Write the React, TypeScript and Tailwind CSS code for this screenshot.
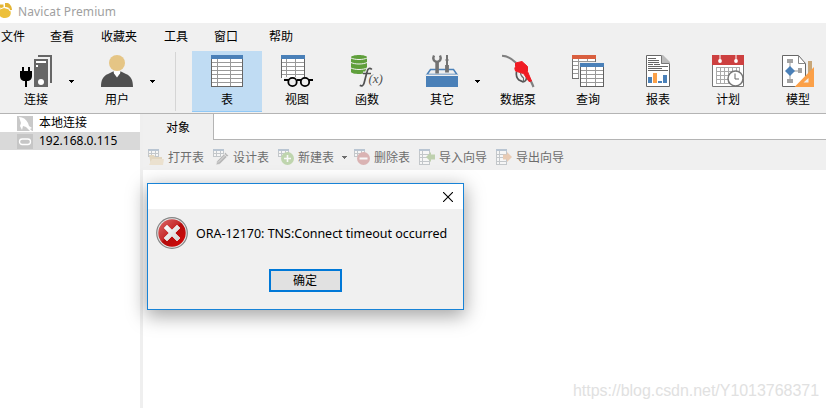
import type { ReactNode } from "react";

const menus = [
  { name: "文件", className: "w-[49px]" },
  { name: "查看", className: "w-[51px]" },
  { name: "收藏夹", className: "w-[63px]" },
  { name: "工具", className: "w-[50px]" },
  { name: "窗口", className: "w-[55px]" },
  { name: "帮助", className: "" },
];

function Caret({ className = "" }: { className?: string }) {
  return (
    <svg width="5" height="3" viewBox="0 0 5 3" className={className} shapeRendering="crispEdges">
      <path d="M0 0h5v1H4v1H3v1H2V2H1V1H0z" fill="currentColor" />
    </svg>
  );
}

function Icon32({ children }: { children: ReactNode }) {
  return (
    <svg width="32" height="32" viewBox="0 0 32 32" fill="none" className="shrink-0 overflow-visible">
      {children}
    </svg>
  );
}

function ConnectIcon() {
  return (
    <Icon32>
      <g fill="#000">
        <path d="M2 12h2v5H2zM8 12h2v5H8zM0 16h12v5c0 3-2 5-5 5v6H5v-6c-3 0-5-2-5-5z" />
      </g>
      <path d="M18 0h14v28h-2V2H18z" fill="#666" />
      <path d="M14 4h14v28H14z" fill="#666" />
      <path d="M16 6h10v2H16zM16 10h2v2h-2z" fill="#fff" />
      <circle cx="21" cy="27" r="3" fill="#fff" />
    </Icon32>
  );
}

function UserIcon() {
  return (
    <Icon32>
      <path d="M0 32c0-7 2-11 7-13l6-3h6l6 3c5 2 7 6 7 13z" fill="#505050" />
      <path d="M12.500 16h7L19 18.500l-3 4-3-4z" fill="#fff" />
      <circle cx="16" cy="8" r="8" fill="#e5c585" />
    </Icon32>
  );
}

function TableIcon() {
  return (
    <Icon32>
      <g shapeRendering="crispEdges">
        <path d="M0 3h32v29H0z" fill="#666" />
        <path d="M1 4h30v27H1z" fill="#fff" />
        <path d="M0 0h32v4H0z" fill="#4a80b8" />
        <path d="M1 7h30v1H1zM1 11h30v1H1zM1 15h30v1H1zM1 19h30v1H1zM1 23h30v1H1zM1 27h30v1H1zM6 4h1v27H6zM19 4h1v27h-1z" fill="#999" />
      </g>
    </Icon32>
  );
}

function ViewIcon() {
  return (
    <Icon32>
      <g shapeRendering="crispEdges">
        <path d="M0 3h24v20H0z" fill="#666" />
        <path d="M1 4h22v20H1z" fill="#fff" />
        <path d="M0 0h24v4H0z" fill="#4a80b8" />
        <path d="M1 7h22v1H1zM1 11h22v1H1zM1 15h22v1H1zM1 19h22v1H1zM5 4h1v18H5zM14 4h1v18h-1z" fill="#999" />
        <path d="M3 22h29v2H3z" fill="#efefef" />
      </g>
      <path d="M3 25h5M16 25h4M28 25h4" stroke="#000" strokeWidth="2" />
      <circle cx="11.500" cy="27" r="4.200" fill="#efefef" stroke="#000" strokeWidth="1.800" />
      <circle cx="24" cy="27" r="4.200" fill="#efefef" stroke="#000" strokeWidth="1.800" />
    </Icon32>
  );
}

function FunctionIcon() {
  return (
    <Icon32>
      <path d="M0 2c0-1 4-2 8-2s8 1 8 2v15c0 1-4 2-8 2s-8-1-8-2z" fill="#5f9f3b" />
      <path d="M0 3c4 2 12 2 16 0M0 7.500c4 2 12 2 16 0M0 13c4 2 12 2 16 0" stroke="#f0f0f0" strokeWidth="1" />
      <path d="M21.500 14.500c-1-2-4-2-5 1.500l-3.500 12c-.8 3-2.500 3.500-4.500 2.500M12 18.500h8" stroke="#efefef" strokeWidth="4" />
      <path d="M20.800 14.500c-1.500-2.200-4-1.200-4.700 2l-3 11.500c-.8 3-2.500 3.400-4.300 2.200M12 18.500h8" stroke="#505050" strokeWidth="1.700" />
      <text x="17.500" y="28" fontSize="13" fill="#505050" className="font-['Liberation_Serif',serif] italic">
        (x)
      </text>
    </Icon32>
  );
}

function OthersIcon() {
  return (
    <Icon32>
      <path d="M4.500 14.500h23l3.500 5H1z" fill="#efefef" stroke="#4a80b8" strokeWidth="1.500" />
      <path d="M8 .5c-1.500 3-.5 6 3 6.500 3.500-.5 4.500-3.500 3-6.500" stroke="#727272" strokeWidth="2.400" />
      <path d="M9.300 6.500h3.600v12H9.300z" fill="#727272" />
      <path d="M20 0h2v4l.8 1-.8 1v4h.9v7.500h-3.800V10h.9V6l-.8-1 .8-1z" fill="#727272" />
      <path d="M0 19.500h32V32H0z" fill="#4a80b8" />
      <path d="M0 19.500h32V21H0z" fill="#efefef" />
    </Icon32>
  );
}

function PumpIcon() {
  return (
    <Icon32>
      <path d="M0 .8c6 .2 9.500 2.500 14 7" stroke="#808080" strokeWidth="2" />
      <path d="M27 24c2 1.500 3 4 4.500 8" stroke="#808080" strokeWidth="2.200" />
      <path d="M14.500 16.500c-.5 3 0 6.500 2.500 8.500l4 1.800c2.500 0 4-2.500 3.500-6" stroke="#555" strokeWidth="1.700" />
      <path d="M18.500 17.500c0 3 1 4 3 5.500v3.500" stroke="#666" strokeWidth="1.100" />
      <path
        d="M13.500 8l6.500-1.500 5.500 5v5l4 9.500-2.500.5-5.500-8-2-.5-6-2-.7-2.500.7-2z"
        fill="#f01c24"
        stroke="#f01c24"
        strokeLinejoin="round"
      />
    </Icon32>
  );
}

function QueryIcon() {
  return (
    <Icon32>
      <g shapeRendering="crispEdges">
        <path d="M0 3h24v21H0z" fill="#707070" />
        <path d="M1 4h22v19H1z" fill="#fff" />
        <path d="M0 0h24v4H0z" fill="#d95f3f" />
        <path d="M1 6h22v1H1zM1 10h22v1H1zM1 14h22v1H1zM1 18h22v1H1zM6 4h1v19H6zM15 4h1v19h-1z" fill="#999" />
        <path d="M7 7h25v25H7z" fill="#efefef" />
        <path d="M8 11h24v21H8z" fill="#606060" />
        <path d="M9 12h22v19H9z" fill="#fff" />
        <path d="M8 8h24v4H8z" fill="#4a80b8" />
        <path d="M9 15h22v1H9zM9 19h22v1H9zM9 23h22v1H9zM9 27h22v1H9zM14 12h1v19h-1zM23 12h1v19h-1z" fill="#999" />
      </g>
    </Icon32>
  );
}

function ReportIcon() {
  return (
    <Icon32>
      <path d="M4.500.5h15l8 8v23h-23z" fill="#fff" stroke="#666" />
      <path d="M19 0h2l7 7v2h-9z" fill="#bbb" />
      <path d="M19.500.5v8h8" stroke="#777" />
      <path d="M6 3.500h8M6 5.500h11M6 7.500h11M6 9.500h5M12 9.500h6M6 11.500h20M6 13.500h14M6 15.500h20" stroke="#666" shapeRendering="crispEdges" />
      <g shapeRendering="crispEdges">
        <path d="M6 22h4v6H6zM16 26h4v2h-4zM21 20h4v8h-4z" fill="#4a80b8" />
        <path d="M11 18h4v10h-4z" fill="#fba048" />
      </g>
    </Icon32>
  );
}

function ScheduleIcon() {
  return (
    <Icon32>
      <path d="M.5 8.500h31v23H.5z" fill="#fff" stroke="#777" />
      <path d="M0 0h32v10H0z" fill="#cd4040" shapeRendering="crispEdges" />
      <path d="M8 0v5M24 0v5" stroke="#fff" />
      <circle cx="8" cy="6" r="1.900" fill="#fff" />
      <circle cx="24" cy="6" r="1.900" fill="#fff" />
      <path
        d="M4 12.500h24M4 16.500h24M4 20.500h20M4 24.500h20M4 28.500h16M4.500 12v17M8.500 12v17M12.500 12v17M16.500 12v17M20.500 12v17M24.500 12v17M27.500 12v6"
        stroke="#aaa"
        shapeRendering="crispEdges"
      />
      <circle cx="23.500" cy="23.500" r="7.500" fill="#fff" stroke="#777" strokeWidth="1.500" />
      <path d="M23 18.500v5.500h4" stroke="#666" />
    </Icon32>
  );
}

function ModelIcon() {
  return (
    <Icon32>
      <path d="M.5.5h16l7 8v23H.5z" fill="#fff" stroke="#666" />
      <path d="M16.500.5v8h7" stroke="#888" />
      <path d="M8 7v18M8 16h11" stroke="#999" />
      <path d="M5 4h6v4H5zM5 24h6v4H5zM16 13h4v5h-4z" fill="#a3a3a3" />
      <path d="M8 11l5 5-5 5-5-5z" fill="#4a80b8" />
      <path d="M26 6h4v12h-4z" fill="#c8a678" />
      <path d="M32 12v20H12.500z" fill="#fba048" />
      <path d="M26.500 23v4.500h-5z" fill="#efefef" />
    </Icon32>
  );
}

function ToolButton({
  label,
  icon,
  active,
  split,
  className = "",
}: {
  label: string;
  icon: ReactNode;
  active?: boolean;
  split?: boolean;
  className?: string;
}) {
  return (
    <div className={`flex shrink-0 ${className}`}>
      <button
        className={`flex h-[61px] w-[70px] shrink-0 flex-col items-center pt-1 ${
          active ? "border-b border-[#90c8f6] bg-[#c0dcf3]" : ""
        }`}
      >
        {icon}
        <span className="mt-1 h-[18px] leading-[18px]">{label}</span>
      </button>
      {split && <Caret className="-ml-[2px] mt-[29px] shrink-0" />}
    </div>
  );
}

// Pale grid used as the base of every table action icon
function SmallGrid({ tall }: { tall?: boolean }) {
  return tall ? (
    <g shapeRendering="crispEdges">
      <path d="M.5 1.500h10v14H.5zM.5 5.500h10M.5 8.500h10M.5 12.500h10M3.500 1v14" stroke="#c3c7ca" fill="#f6f6f6" />
      <path d="M0 0h11v2H0z" fill="#b9c5d2" />
    </g>
  ) : (
    <g shapeRendering="crispEdges">
      <path d="M.5 1.500h10v6H.5zM.5 4.500h10M3.500 1v7M7.500 1v7" stroke="#c3c7ca" fill="#f6f6f6" />
      <path d="M0 0h11v2H0z" fill="#b9c5d2" />
    </g>
  );
}

const actions = [
  {
    name: "打开表",
    icon: (
      <>
        <SmallGrid />
        <path d="M1 6h5l1 2h7v8H3z" fill="#e2d6bf" />
        <path d="M4 10h12l-1 6H1z" fill="#ebe1cf" />
      </>
    ),
  },
  {
    name: "设计表",
    icon: (
      <>
        <SmallGrid />
        <path d="M4 12l8.500-8.500 3 3L7 15l-4 1z" fill="#b9b9b9" stroke="#efefef" strokeWidth=".6" />
        <path d="M5 13.500l8-8M11 5l3 3" stroke="#dedede" />
      </>
    ),
  },
  {
    name: "新建表",
    split: true,
    icon: (
      <>
        <SmallGrid />
        <circle cx="9.500" cy="9.500" r="6.500" fill="#bfd5ae" />
        <path d="M9.500 6v7M6 9.500h7" stroke="#f8f8f8" strokeWidth="1.600" />
      </>
    ),
  },
  {
    name: "删除表",
    icon: (
      <>
        <SmallGrid />
        <circle cx="9.500" cy="9.500" r="6.500" fill="#dab3b3" />
        <path d="M5.500 9.500h8" stroke="#f8f8f8" strokeWidth="2" />
      </>
    ),
  },
  {
    name: "导入向导",
    icon: (
      <>
        <SmallGrid tall />
        <path d="M16 5.500v5h-4V13L7 8l5-5v2.500z" fill="#bed0ae" />
      </>
    ),
  },
  {
    name: "导出向导",
    icon: (
      <>
        <SmallGrid tall />
        <path d="M7 5.500v5h4V13l5-5-5-5v2.500z" fill="#e8cbb4" />
      </>
    ),
  },
];

function ErrorIcon() {
  return (
    <svg width="32" height="32" viewBox="0 0 32 32" className="shrink-0">
      <defs>
        <linearGradient id="err" x1="0" y1="0" x2="1" y2="1">
          <stop offset="0" stopColor="#dc6a6a" />
          <stop offset=".45" stopColor="#c62a2a" />
          <stop offset=".5" stopColor="#b30c0c" />
          <stop offset="1" stopColor="#d80808" />
        </linearGradient>
        <linearGradient id="cross" x1="0" y1="0" x2="1" y2="1">
          <stop offset="0" stopColor="#fff" />
          <stop offset="1" stopColor="#d0d0d0" />
        </linearGradient>
      </defs>
      <circle cx="16" cy="16" r="15.300" fill="#e6e6e6" stroke="#858585" strokeWidth="1.200" />
      <circle cx="16" cy="16" r="13.700" fill="url(#err)" />
      <path
        d="M11 8l5 5 5-5 3 3-5 5 5 5-3 3-5-5-5 5-3-3 5-5-5-5z"
        fill="url(#cross)"
        stroke="#e4dede"
        strokeWidth=".8"
        strokeLinejoin="round"
      />
    </svg>
  );
}

function ErrorDialog() {
  return (
    <div className="absolute left-[147px] top-[183px] flex h-[127px] w-[317px] flex-col border border-[#1883d7] bg-[#f0f0f0] shadow-[0_5px_18px_1px_rgba(0,0,0,0.36)]">
      <div className="flex h-[25px] shrink-0 items-center justify-end bg-white pr-[10px]">
        <button aria-label="Close">
          <svg width="10" height="10" viewBox="0 0 10 10" className="block">
            <path d="M0 0l10 10M10 0L0 10" stroke="#000" strokeWidth="1.100" />
          </svg>
        </button>
      </div>
      <div className="flex items-center gap-2 pl-2 pt-2">
        <ErrorIcon />
        <p className="whitespace-nowrap pt-[2px] text-[12.500px] tracking-[-0.02px]">ORA-12170: TNS:Connect timeout occurred</p>
      </div>
      <button className="ml-[121px] mt-5 h-[23px] w-[73px] border-2 border-[#0078d7] bg-[#e1e1e1] pr-px leading-[19px]">
        确定
      </button>
    </div>
  );
}

export default function App() {
  return (
    <div className="relative flex h-[408px] w-[826px] flex-col overflow-hidden bg-white font-['Noto_Sans','Noto_Sans_CJK_SC',sans-serif] text-xs text-black">
      {/* Title bar */}
      <header className="flex h-[23px] shrink-0 items-center">
        <svg width="13" height="16" viewBox="0 0 13 16" className="-mt-[1px]">
          <path d="M0 5c2-2 3-1 5 0 2 0 4 0 5 2 2 4 0 8-5 8-2 0-4-.5-5-2z" fill="#edc03b" />
          <path d="M0 1.500h3.500v3H0zM5 0c3-1 7 2 7 7h-2c0-2-2-3-5-3z" fill="#e4b534" />
          <path d="M0 6l4-1.500L9 6l1 2" stroke="#fff" fill="none" />
        </svg>
        <h1 className="ml-[5px] mt-px text-xs tracking-[0.1px] text-[#a0a0a0]">Navicat Premium</h1>
      </header>

      {/* Menu bar */}
      <nav className="flex h-7 shrink-0 items-center bg-[#f0f0f0] pl-px">
        {menus.map((menu) => (
          <span key={menu.name} className={`shrink-0 ${menu.className}`}>
            {menu.name}
          </span>
        ))}
      </nav>

      {/* Main toolbar */}
      <div className="flex h-[63px] shrink-0 items-start border-b border-[#b4b4b4] bg-[#f0f0f0] pl-px">
        <ToolButton label="连接" icon={<ConnectIcon />} split className="w-[81px]" />
        <ToolButton label="用户" icon={<UserIcon />} split className="w-[81px]" />
        <div className="ml-3 mr-4 mt-px h-[59px] w-px shrink-0 bg-[#d5d5d5]" />
        <ToolButton label="表" icon={<TableIcon />} active />
        <ToolButton label="视图" icon={<ViewIcon />} />
        <ToolButton label="函数" icon={<FunctionIcon />} />
        <ToolButton label="其它" icon={<OthersIcon />} split className="ml-[5px] w-[76px]" />
        <ToolButton label="数据泵" icon={<PumpIcon />} />
        <ToolButton label="查询" icon={<QueryIcon />} />
        <ToolButton label="报表" icon={<ReportIcon />} />
        <ToolButton label="计划" icon={<ScheduleIcon />} />
        <ToolButton label="模型" icon={<ModelIcon />} />
      </div>

      <div className="flex min-h-0 flex-1">
        {/* Connection tree */}
        <aside className="w-[140px] shrink-0">
          <div className="flex h-[18px] items-center gap-[6px] pl-[17px]">
            <svg width="16" height="15" viewBox="0 0 16 15">
              <path d="M0 0h16v15H0z" fill="#c9c9c9" />
              <path d="M2 1c4 0 7 2 9 6l1 3 3 2-2 1 2 2h-2l-4-4-3-1-1 4-2-4 1-3z" fill="#fff" />
            </svg>
            <span className="leading-[18px]">本地连接</span>
          </div>
          <div className="flex h-[18px] items-center gap-[6px] bg-[#d9d9d9] pl-[17px]">
            <svg width="16" height="15" viewBox="0 0 16 15">
              <path d="M0 0h16v15H0z" fill="#c6c6c6" />
              <rect x="2.500" y="5" width="11" height="5.500" rx="2.700" fill="none" stroke="#fff" strokeWidth="1.300" />
            </svg>
            <span className="leading-[18px]">192.168.0.115</span>
          </div>
        </aside>
        <div className="w-[3px] shrink-0 bg-[#efefef]" />

        {/* Object panel */}
        <main className="flex min-w-0 flex-1 flex-col">
          <div className="flex h-[26px] shrink-0">
            <div className="flex w-[70px] items-center justify-center bg-[#f0f0f0] pt-[2px]">对象</div>
            <div className="flex-1 border-b border-l border-[#b4b4b4]" />
          </div>
          <div className="flex h-[30px] shrink-0 items-center gap-[9px] bg-[#f0f0f0] pl-[5px] text-[#6d6d6d]">
            {actions.map((action) => (
              <div key={action.name} className="flex shrink-0 items-center">
                <svg width="16" height="16" viewBox="0 0 16 16" fill="none" className="mt-[3px]">
                  {action.icon}
                </svg>
                <span className="ml-1 mt-[5px]">{action.name}</span>
                {action.split && <Caret className="-mr-[2px] ml-2 mt-1" />}
              </div>
            ))}
          </div>
        </main>
      </div>

      <span className="absolute left-[573px] top-[381px] whitespace-nowrap font-['Liberation_Sans',sans-serif] text-base leading-5 tracking-[-0.04px] text-[#e1e1e1]">
        https://blog.csdn.net/Y1013768371
      </span>

      <ErrorDialog />
    </div>
  );
}
